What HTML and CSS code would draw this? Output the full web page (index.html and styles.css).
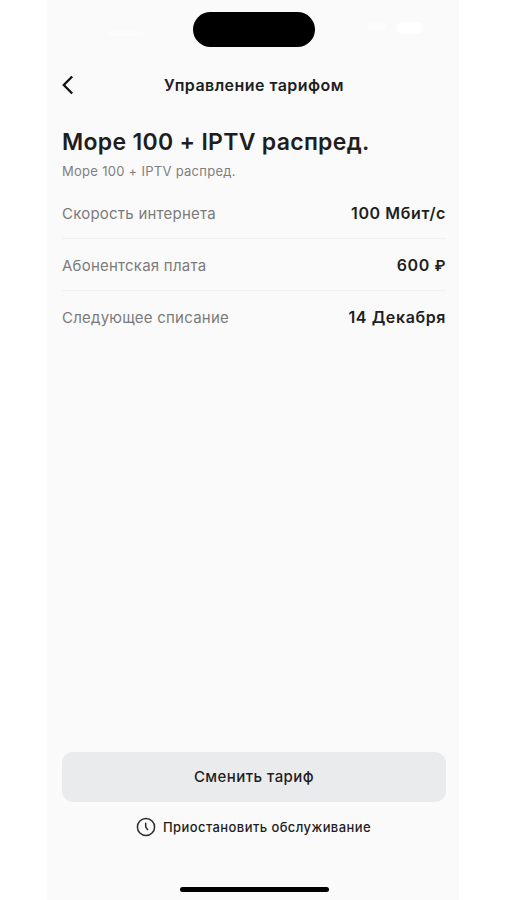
FILE: index.html
```
<!DOCTYPE html>
<html lang="ru">
<head>
<meta charset="utf-8">
<title>Управление тарифом</title>
<link rel="stylesheet" href="styles.css">
</head>
<body>
<main class="screen">
  <div class="status"><span class="time"></span><div class="island"></div><span class="signals"><i class="signal"></i><i class="battery"></i></span></div>
  <header class="nav">
    <svg class="back" viewBox="0 0 12 20" aria-hidden="true"><path d="M10.2 1.5 1.8 10l8.4 8.5"/></svg>
    <h1 class="nav-title">Управление тарифом</h1>
  </header>
  <section class="plan">
    <h2 class="plan-title">Море 100 + IPTV распред.</h2>
    <p class="plan-sub">Море 100 + IPTV распред.</p>
    <dl class="rows">
      <div class="row"><dt>Скорость интернета</dt><dd>100 Мбит/с</dd></div>
      <div class="row"><dt>Абонентская плата</dt><dd>600 <span class="currency">₽</span></dd></div>
      <div class="row"><dt>Следующее списание</dt><dd>14 Декабря</dd></div>
    </dl>
  </section>
  <footer class="actions">
    <button class="primary">Сменить тариф</button>
    <button class="secondary">
      <svg class="clock" viewBox="0 0 20 20" aria-hidden="true"><circle cx="10" cy="10" r="8.6"/><path d="M9.7 6.2v3.6l1.9 2.9"/></svg>
      <span>Приостановить обслуживание</span>
    </button>
    <div class="home"></div>
  </footer>
</main>
</body>
</html>
```
FILE: styles.css
```
* { box-sizing: border-box; margin: 0; padding: 0; }
body { background: #fff; font-family: Inter, sans-serif; color: #1e1e1e; }
.screen { width: 412px; height: 900px; margin-left: 47px; padding: 0 13px 0 15px; background: #fafafa; display: flex; flex-direction: column; }
.status { height: 59px; padding-top: 12px; display: grid; grid-template-columns: 131px 122px 1fr; }
.island { width: 122px; height: 35px; border-radius: 18px; background: #000; }
.time { width: 36px; height: 5px; margin: 19px 0 0 46px; border-radius: 4px; background: #fcfcfc; }
.signals { display: flex; gap: 10px; padding: 10px 0 0 52px; }
.signal { width: 20px; height: 8px; border-radius: 4px; background: #fcfcfc; }
.battery { width: 25px; height: 12px; border-radius: 5px; background: #fff; }
.nav { height: 52px; display: grid; grid-template-columns: 12px 1fr 12px; align-items: center; }
.back { width: 12px; height: 20px; fill: none; stroke: #111; stroke-width: 2.3; }
.nav-title { text-align: center; font-size: 16px; font-weight: 600; letter-spacing: .45px; }
.plan-title { height: 30px; margin-top: 16px; font-size: 23px; line-height: 30px; font-weight: 600; letter-spacing: .3px; white-space: nowrap; }
.plan-sub { margin-top: 5px; font-size: 13px; line-height: 18px; color: #808080; letter-spacing: .28px; }
.rows { margin-top: 7px; }
.row { height: 52px; padding-top: 2px; display: flex; justify-content: space-between; align-items: center; border-bottom: 1px solid #f1f1f1; }
.row:last-child { border-color: transparent; }
.row dt { font-size: 15px; line-height: 19px; color: #7b7b7b; letter-spacing: .23px; }
.row dd { font-size: 16px; line-height: 19px; font-weight: 600; letter-spacing: .6px; }
.currency { font-size: 15px; }
.actions { margin-top: auto; height: 148px; display: flex; flex-direction: column; align-items: center; }
button { border: 0; font: inherit; color: inherit; }
.primary { width: 100%; height: 50px; padding-bottom: 1px; flex: none; border-radius: 11px; background: #eaebec; font-size: 15px; font-weight: 500; letter-spacing: .45px; }
.secondary { height: 50px; padding-right: 1px; display: flex; align-items: center; gap: 7px; background: none; font-size: 13px; font-weight: 500; letter-spacing: .41px; }
.clock { width: 20px; height: 20px; fill: none; stroke: #2b2b2b; stroke-width: 1.5; stroke-linecap: round; stroke-linejoin: round; }
.home { width: 149px; height: 5px; margin-top: 35px; border-radius: 3px; background: #000; }
```
